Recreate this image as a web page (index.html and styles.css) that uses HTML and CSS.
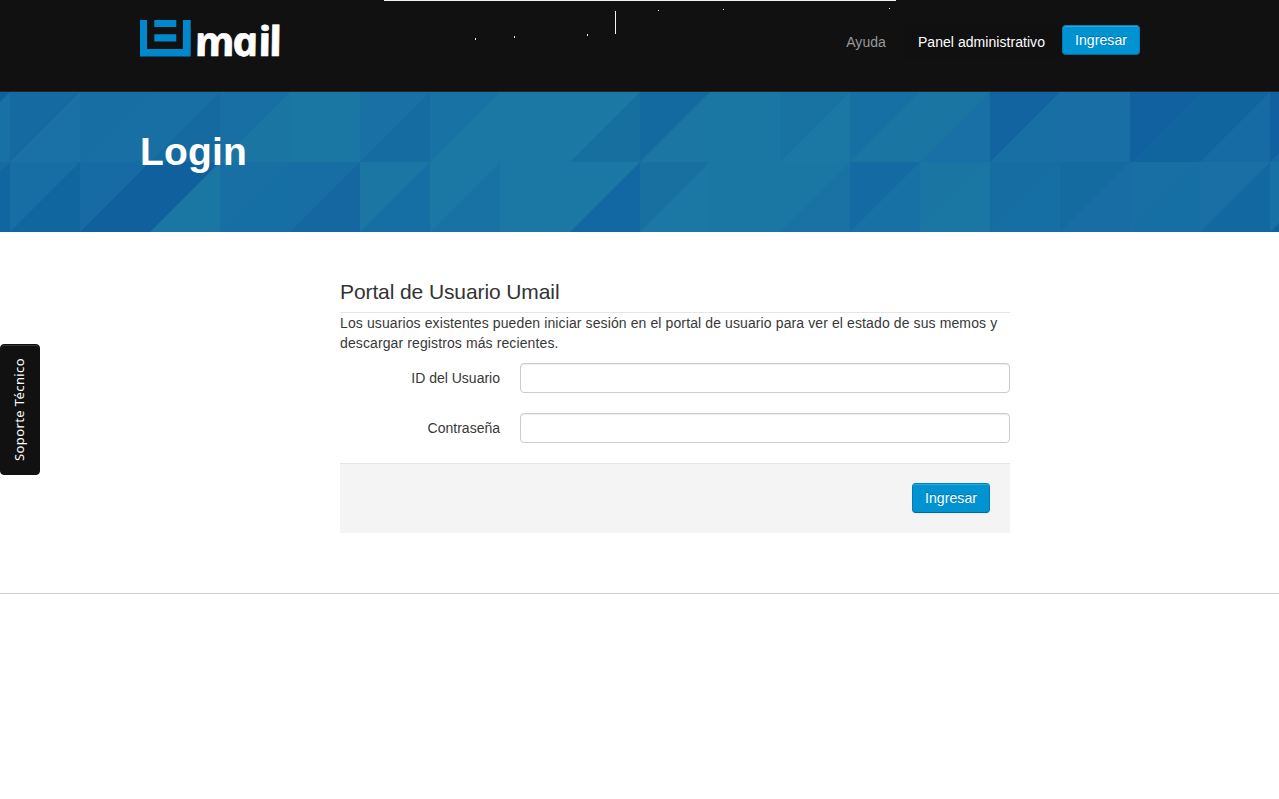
FILE: index.html
```html
<!DOCTYPE html>
<html lang="es">
<head>
<meta charset="utf-8">
<title>Login - Umail</title>
<link rel="stylesheet" href="styles.css">
</head>
<body>
<header class="navbar">
  <svg class="specks" width="512" height="40" viewBox="384 0 512 40" shape-rendering="crispEdges" aria-hidden="true">
    <path fill="#f2f2f2" d="M384 0h512v1H384zM475 38h1v2h-1zM514 36h1v2h-1zM587 34h1v2h-1zM615 11h1v23h-1zM658 10h1v1h-1zM723 9h1v1h-1zM889 8h1v1h-1z"/>
  </svg>
  <div class="container navbar-row">
    <a class="brand" href="#">
      <svg width="140" height="40" viewBox="0 0 140 40" role="img" aria-label="Umail">
        <path fill="#0088cc" d="M0 0h7v29h36V0h7.700v36.500H0zM14.300 0h22v7h-22zM14.300 14.300h22v7.200h-22z"/>
        <text class="brand-text" transform="translate(57 36) skewX(12) scale(1.08 1)" x="0 34.800 58.900 68.700">mail</text>
      </svg>
    </a>
    <nav class="menu">
      <a class="menu-link" href="#">Ayuda</a>
      <a class="menu-link active" href="#">Panel administrativo</a>
      <a class="btn" href="#">Ingresar</a>
    </nav>
  </div>
</header>
<section class="hero">
  <svg class="hero-pattern" id="pattern" width="1279" height="140" aria-hidden="true"></svg>
  <div class="container"><h1 class="hero-title">Login</h1></div>
</section>
<main class="login">
  <h2 class="login-title">Portal de Usuario Umail</h2>
  <p class="login-text">Los usuarios existentes pueden iniciar sesión en el portal de usuario para ver el estado de sus memos y descargar registros más recientes.</p>
  <form class="form">
    <div class="field"><label class="label" for="user">ID del Usuario</label><input class="input" id="user" type="text"></div>
    <div class="field"><label class="label" for="pass">Contraseña</label><input class="input" id="pass" type="password"></div>
    <div class="actions"><button class="btn" type="button">Ingresar</button></div>
  </form>
</main>
<footer class="footer"></footer>
<a class="support" href="#"><span class="support-text">Soporte Técnico</span></a>
<script src="pattern.js"></script>
</body>
</html>
```
FILE: styles.css
```css
* { box-sizing: border-box; }
body {
  margin: 0;
  background: #fff;
  color: #383838;
  font: 14px/20px "Liberation Sans", Arial, sans-serif;
}
a { text-decoration: none; color: inherit; }
.container { width: 1000px; margin-left: 140px; }
.navbar {
  position: relative;
  height: 92px;
  background: #111;
  border-bottom: 1px solid #252525;
}
.specks { position: absolute; left: 384px; top: 0; }
.navbar-row { display: flex; justify-content: space-between; align-items: flex-start; }
.brand { display: block; padding-top: 20px; }
.brand svg { display: block; overflow: visible; }
.brand-text {
  font: italic 700 41px "Open Sans", sans-serif;
  fill: #fff;
  stroke: #fff;
  stroke-width: 0.6px;
  stroke-linejoin: round;
}
.menu { display: flex; padding-top: 25px; }
.menu-link { height: 34px; padding: 7px 15px; margin-right: 2px; color: #999; letter-spacing: 0.05px; border-radius: 3px; }
.menu-link.active { color: #fff; background: #101010; }
.btn {
  display: block;
  width: 78px;
  height: 30px;
  padding: 4px 0;
  border: 1px solid #0077b3;
  border-color: #0081bd #007cb5 #006a9c;
  border-radius: 4px;
  background: #0093d2;
  color: #fff;
  font: 14px/20px "Liberation Sans", Arial, sans-serif;
  text-align: center;
  letter-spacing: 0.1px;
  text-shadow: 0 -1px 0 rgba(0, 0, 0, 0.25);
  box-shadow: inset 0 1px 0 rgba(255, 255, 255, 0.2), 0 1px 2px rgba(0, 0, 0, 0.05);
}
.hero { position: relative; height: 140px; background: #176fa4; overflow: hidden; }
.hero-pattern { position: absolute; left: 0; top: 0; }
.hero-title {
  position: relative;
  margin: 0;
  padding-top: 40px;
  color: #fff;
  font-size: 39px;
  line-height: 40px;
  letter-spacing: 0.2px;
}
.login { width: 670px; margin: 50px 0 0 340px; }
.login-title {
  margin: 0;
  height: 31px;
  border-bottom: 1px solid #e5e5e5;
  color: #333;
  font-size: 21px;
  font-weight: normal;
  line-height: 20px;
  letter-spacing: -0.1px;
}
.login-text { margin: 0 0 10px; letter-spacing: 0.11px; }
.form { display: flex; flex-direction: column; gap: 20px; }
.field { display: flex; gap: 20px; }
.label { width: 160px; padding-top: 5px; text-align: right; }
.input {
  width: 490px;
  height: 30px;
  border: 1px solid #ccc;
  border-radius: 4px;
  box-shadow: inset 0 1px 1px rgba(0, 0, 0, 0.075);
}
.actions {
  display: flex;
  justify-content: flex-end;
  height: 70px;
  padding: 19px 20px;
  border-top: 1px solid #e5e5e5;
  background: #f4f4f4;
}
.footer { margin-top: 60px; border-top: 1px solid #ccc; }
.support {
  position: fixed;
  left: 0;
  top: 344px;
  width: 40px;
  height: 131px;
  padding-right: 3px;
  display: flex;
  align-items: center;
  justify-content: center;
  border: 1px solid #111;
  border-radius: 4px;
  background: #111;
  box-shadow: inset 0 1px 0 #333;
  color: #fff;
}
.support-text {
  writing-mode: vertical-rl;
  transform: rotate(180deg);
  font: 13px/20px "Noto Sans", sans-serif;
  letter-spacing: 0.4px;
}
```
FILE: pattern.js
```javascript
// Each cell is split by a diagonal: upper-left colour, then lower-right colour.
const size = 70;
const rows = [
  ["11619f 1871a5", "156ba1 1a71a6", "176ea3 176fa4", "176fa4 156aa0", "176fa4 1a75a3", "1a76a3 1a76a3", "1870a5 146ca0", "1873a4 1b77a3", "1b77a4 1b77a4", "1b77a3 176fa0", "136aa0 1b76a3", "1a76a3 1a76a3", "1873a2 1b77a3", "1670a4 1a75a3", "1a75a3 1870a6", "1164a0 176fa3", "186ea5 186ea5", "11609f 10659f", "10659f 166ba4", "11609f 156ba4"],
  ["176ba0 1066a0", "176ea5 1067a0", "176ba4 10609d", "10609d 1a76a3", "176fa4 166fa4", "176ea4 1567a1", "1b76a3 166fa4", "1b77a4 1872a3", "1b77a4 1b77a4", "1b77a4 1268a2", "1770a0 1b77a3", "1a76a3 1a76a3", "1a76a3 1972a3", "146ba3 1871a4", "1a75a3 1a76a3", "166da2 166fa4", "146ba0 186da5", "176fa3 166fa4", "1a70a5 1268a0", "1871a5 10619f"]
];
let shapes = "";
rows.forEach((row, r) => row.forEach((pair, c) => {
  const [upper, lower] = pair.split(" ");
  const x = c * size - 60, y = r * size;
  shapes += `<rect x="${x}" y="${y}" width="70" height="70" fill="#${lower}"/>`;
  shapes += `<path d="M${x} ${y}h70l-70 70z" fill="#${upper}"/>`;
}));
document.getElementById("pattern").innerHTML = shapes;
```
